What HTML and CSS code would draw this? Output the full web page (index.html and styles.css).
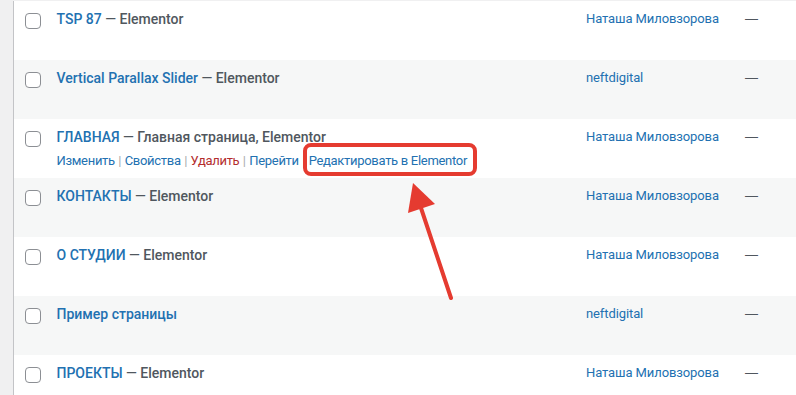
FILE: index.html
```html
<!DOCTYPE html>
<html lang="ru">
<head>
    <meta charset="UTF-8">
    <meta name="viewport" content="width=device-width, initial-scale=1.0">
    <title>Страницы</title>
    <link rel="stylesheet" href="styles.css">
</head>
<body>
    <div class="wrap">
        <table class="pages">
            <colgroup>
                <col class="col-check">
                <col class="col-title">
                <col class="col-author">
                <col class="col-extra">
            </colgroup>
            <tbody>
                <tr>
                    <td class="check"><span class="box"></span></td>
                    <td class="title"><a href="#">TSP 87</a><span class="state"> — Elementor</span></td>
                    <td class="author"><a href="#">Наташа Миловзорова</a></td>
                    <td class="extra">—</td>
                </tr>
                <tr>
                    <td class="check"><span class="box"></span></td>
                    <td class="title"><a href="#">Vertical Parallax Slider</a><span class="state"> — Elementor</span></td>
                    <td class="author"><a href="#">neftdigital</a></td>
                    <td class="extra">—</td>
                </tr>
                <tr>
                    <td class="check"><span class="box"></span></td>
                    <td class="title">
                        <a href="#">ГЛАВНАЯ</a><span class="state"> — Главная страница, Elementor</span>
                        <div class="row-actions">
                            <a href="#">Изменить</a><span class="sep">|</span><a href="#">Свойства</a><span class="sep">|</span><a href="#" class="delete">Удалить</a><span class="sep">|</span><a href="#">Перейти</a><span class="sep">|</span><a href="#" class="highlight">Редактировать в Elementor</a>
                        </div>
                    </td>
                    <td class="author"><a href="#">Наташа Миловзорова</a></td>
                    <td class="extra">—</td>
                </tr>
                <tr>
                    <td class="check"><span class="box"></span></td>
                    <td class="title"><a href="#">КОНТАКТЫ</a><span class="state"> — Elementor</span></td>
                    <td class="author"><a href="#">Наташа Миловзорова</a></td>
                    <td class="extra">—</td>
                </tr>
                <tr>
                    <td class="check"><span class="box"></span></td>
                    <td class="title"><a href="#">О СТУДИИ</a><span class="state"> — Elementor</span></td>
                    <td class="author"><a href="#">Наташа Миловзорова</a></td>
                    <td class="extra">—</td>
                </tr>
                <tr>
                    <td class="check"><span class="box"></span></td>
                    <td class="title"><a href="#">Пример страницы</a></td>
                    <td class="author"><a href="#">neftdigital</a></td>
                    <td class="extra">—</td>
                </tr>
                <tr>
                    <td class="check"><span class="box"></span></td>
                    <td class="title"><a href="#">ПРОЕКТЫ</a><span class="state"> — Elementor</span></td>
                    <td class="author"><a href="#">Наташа Миловзорова</a></td>
                    <td class="extra">—</td>
                </tr>
            </tbody>
        </table>
    </div>

    <!-- стрелка-указатель -->
    <svg class="arrow" width="796" height="395" viewBox="0 0 796 395">
        <line x1="451" y1="298" x2="419" y2="202" stroke="#e53b30" stroke-width="4" stroke-linecap="round"/>
        <polygon points="413,183 408,213 435,204" fill="#e53b30"/>
    </svg>
</body>
</html>
```

FILE: styles.css
```css
body {
    margin: 0;
    background-color: #f0f0f1;
    font-family: Roboto, "Open Sans", Arial, sans-serif;
    color: #3c434a;
    overflow: hidden;
}
.wrap {
    padding-left: 13px;
    height: 395px;
}
.pages {
    width: 100%;
    border-collapse: collapse;
    table-layout: fixed;
    background-color: #fff;
    border-left: 1px solid #c3c4c7;
    border-top: 1px solid #f0f0f1;
}
.col-check {
    width: 33px;
}
.col-author {
    width: 159px;
}
.col-extra {
    width: 61px;
}
.pages tr {
    height: 59px;
}
.pages tr:nth-child(even) {
    background-color: #f6f7f7;
}
.pages td {
    vertical-align: top;
    padding: 8px 10px;
    font-size: 13px;
    line-height: 1.5;
    box-sizing: border-box;
}
.pages a {
    color: #2271b1;
    text-decoration: none;
}
.check {
    padding: 12px 0 0 11px !important;
}
.box {
    display: block;
    width: 16px;
    height: 16px;
    border: 1px solid #8c8f94;
    border-radius: 4px;
    box-sizing: border-box;
    background-color: #fff;
}
.title {
    font-size: 14px !important;
    font-weight: 500;
    white-space: nowrap;
}
.state {
    color: #50575e;
}
.row-actions {
    font-size: 13px;
    font-weight: 400;
    padding-top: 3px;
    letter-spacing: -0.3px;
}
.sep {
    color: #a7aaad;
    padding: 0 3.5px;
}
.row-actions .delete {
    color: #b32d2e;
}
.highlight {
    position: relative;
}
.highlight::after {
    content: "";
    position: absolute;
    left: -6px;
    right: -10px;
    top: -10px;
    bottom: -8px;
    border: 4px solid #e53b30;
    border-radius: 8px;
}
.author {
    white-space: nowrap;
    letter-spacing: -0.1px;
}
.extra {
    color: #50575e;
    font-family: "Liberation Sans", Arial, sans-serif;
}
.arrow {
    position: absolute;
    left: 0;
    top: 0;
    pointer-events: none;
}
```
